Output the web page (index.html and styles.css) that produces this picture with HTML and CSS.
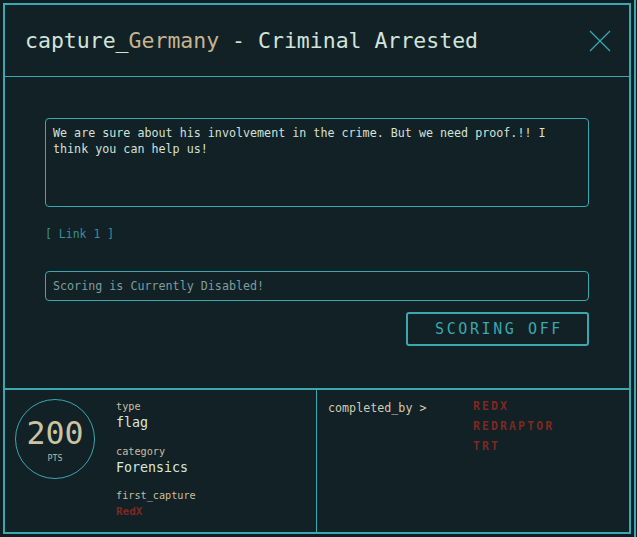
FILE: index.html
```html
<!DOCTYPE html>
<html>
<head>
<meta charset="utf-8">
<link rel="stylesheet" href="styles.css">
</head>
<body>
<div class="stage">
  <div class="modal">
    <div class="header">
      <h1 class="title">capture_<span class="country">Germany</span> - Criminal Arrested</h1>
      <svg class="close" width="22" height="22" viewBox="0 0 22 22"><path d="M1 1 L21 21 M21 1 L1 21" stroke="#3ba7ae" stroke-width="1.3" fill="none"/></svg>
    </div>
    <div class="body">
      <div class="desc">We are sure about his involvement in the crime. But we need proof.!! I think you can help us!</div>
      <div class="links"><a class="link">[ Link 1 ]</a></div>
      <div class="input">Scoring is Currently Disabled!</div>
      <div class="actions"><div class="btn">SCORING OFF</div></div>
    </div>
    <div class="footer">
      <div class="left">
        <div class="points">
          <div class="num">200</div>
          <div class="pts">PTS</div>
        </div>
        <div class="info">
          <div class="group"><div class="label">type</div><div class="value">flag</div></div>
          <div class="group"><div class="label">category</div><div class="value">Forensics</div></div>
          <div class="group"><div class="label">first_capture</div><div class="value red">RedX</div></div>
        </div>
      </div>
      <div class="right">
        <div class="cb">completed_by &gt;</div>
        <div class="names">
          <div class="name">REDX</div>
          <div class="name">REDRAPTOR</div>
          <div class="name">TRT</div>
        </div>
      </div>
    </div>
  </div>
</div>
</body>
</html>
```

FILE: styles.css
```css
html, body {
  margin: 0;
  padding: 0;
  background: #0f1e22;
}
body {
  font-family: "DejaVu Sans Mono", "Liberation Mono", monospace;
  color: #d6e4dc;
}
.stage {
  width: 636px;
  height: 537px;
  box-sizing: border-box;
  border-right: 2px solid #3ba7ae;
  padding: 3px 0 0 3px;
}
.modal {
  width: 628px;
  height: 531px;
  box-sizing: border-box;
  border: 2px solid #3ba7ae;
  background: #112126;
  display: flex;
  flex-direction: column;
}
.header {
  height: 71px;
  border-bottom: 1px solid #3ba7ae;
  display: flex;
  align-items: center;
  justify-content: space-between;
  padding: 0 18px 0 20px;
  flex-shrink: 0;
}
.title {
  margin: 0;
  font-size: 21.5px;
  font-weight: normal;
  color: #d3e2db;
  letter-spacing: 0;
}
.country { color: #c6b48f; }
.body {
  flex: 1;
  padding: 41px 40px 0 40px;
}
.desc {
  height: 89px;
  box-sizing: border-box;
  border: 1px solid #3ba7ae;
  border-radius: 4px;
  padding: 6px 7px;
  font-size: 11.7px;
  line-height: 16px;
  color: #d4e0d8;
}
.links {
  margin-top: 19px;
  font-size: 11.5px;
  line-height: 16px;
  color: #3d8f95;
}
.input {
  margin-top: 29px;
  height: 30px;
  box-sizing: border-box;
  border: 1px solid #3ba7ae;
  border-radius: 4px;
  padding: 0 7px;
  display: flex;
  align-items: center;
  font-size: 11.7px;
  color: #7e9d9c;
}
.actions {
  display: flex;
  justify-content: flex-end;
  margin-top: 11px;
}
.btn {
  width: 183px;
  height: 34px;
  box-sizing: border-box;
  border: 2px solid #3ba7ae;
  border-radius: 3px;
  display: flex;
  align-items: center;
  justify-content: center;
  font-size: 15px;
  letter-spacing: 2.6px;
  color: #3ba7ae;
  padding-left: 3px;
}
.footer {
  height: 144px;
  border-top: 2px solid #3ba7ae;
  display: flex;
  flex-shrink: 0;
  box-sizing: border-box;
}
.left {
  width: 312px;
  border-right: 1px solid #3ba7ae;
  display: flex;
  align-items: flex-start;
  padding: 9px 0 0 10px;
  box-sizing: border-box;
}
.points {
  width: 80px;
  height: 80px;
  box-sizing: border-box;
  border: 1px solid #3ba7ae;
  border-radius: 50%;
  display: flex;
  flex-direction: column;
  align-items: center;
  justify-content: center;
  flex-shrink: 0;
}
.num {
  font-size: 31.6px;
  line-height: 32px;
  color: #cbc4a2;
  margin-top: 3px;
}
.pts {
  font-size: 8.4px;
  line-height: 12px;
  color: #b9bba3;
  margin-top: 3px;
}
.info {
  margin-left: 21px;
  margin-top: 1px;
}
.group { margin-bottom: 12.5px; }
.label {
  font-size: 10.2px;
  line-height: 14px;
  color: #c8bd9f;
}
.value {
  font-size: 13.3px;
  line-height: 18px;
  color: #d8e6df;
}
.value.red, .name {
  color: #7e2822;
  font-weight: bold;
}
.value.red {
  font-size: 11px;
}
.right {
  flex: 1;
  display: flex;
  align-items: flex-start;
  padding: 6px 0 0 11px;
}
.cb {
  width: 145px;
  font-size: 11.7px;
  line-height: 16px;
  margin-top: 4px;
  color: #d0cbb2;
}
.names { display: flex; flex-direction: column; }
.name {
  font-size: 11.5px;
  line-height: 20px;
  letter-spacing: 2.1px;
}
```
